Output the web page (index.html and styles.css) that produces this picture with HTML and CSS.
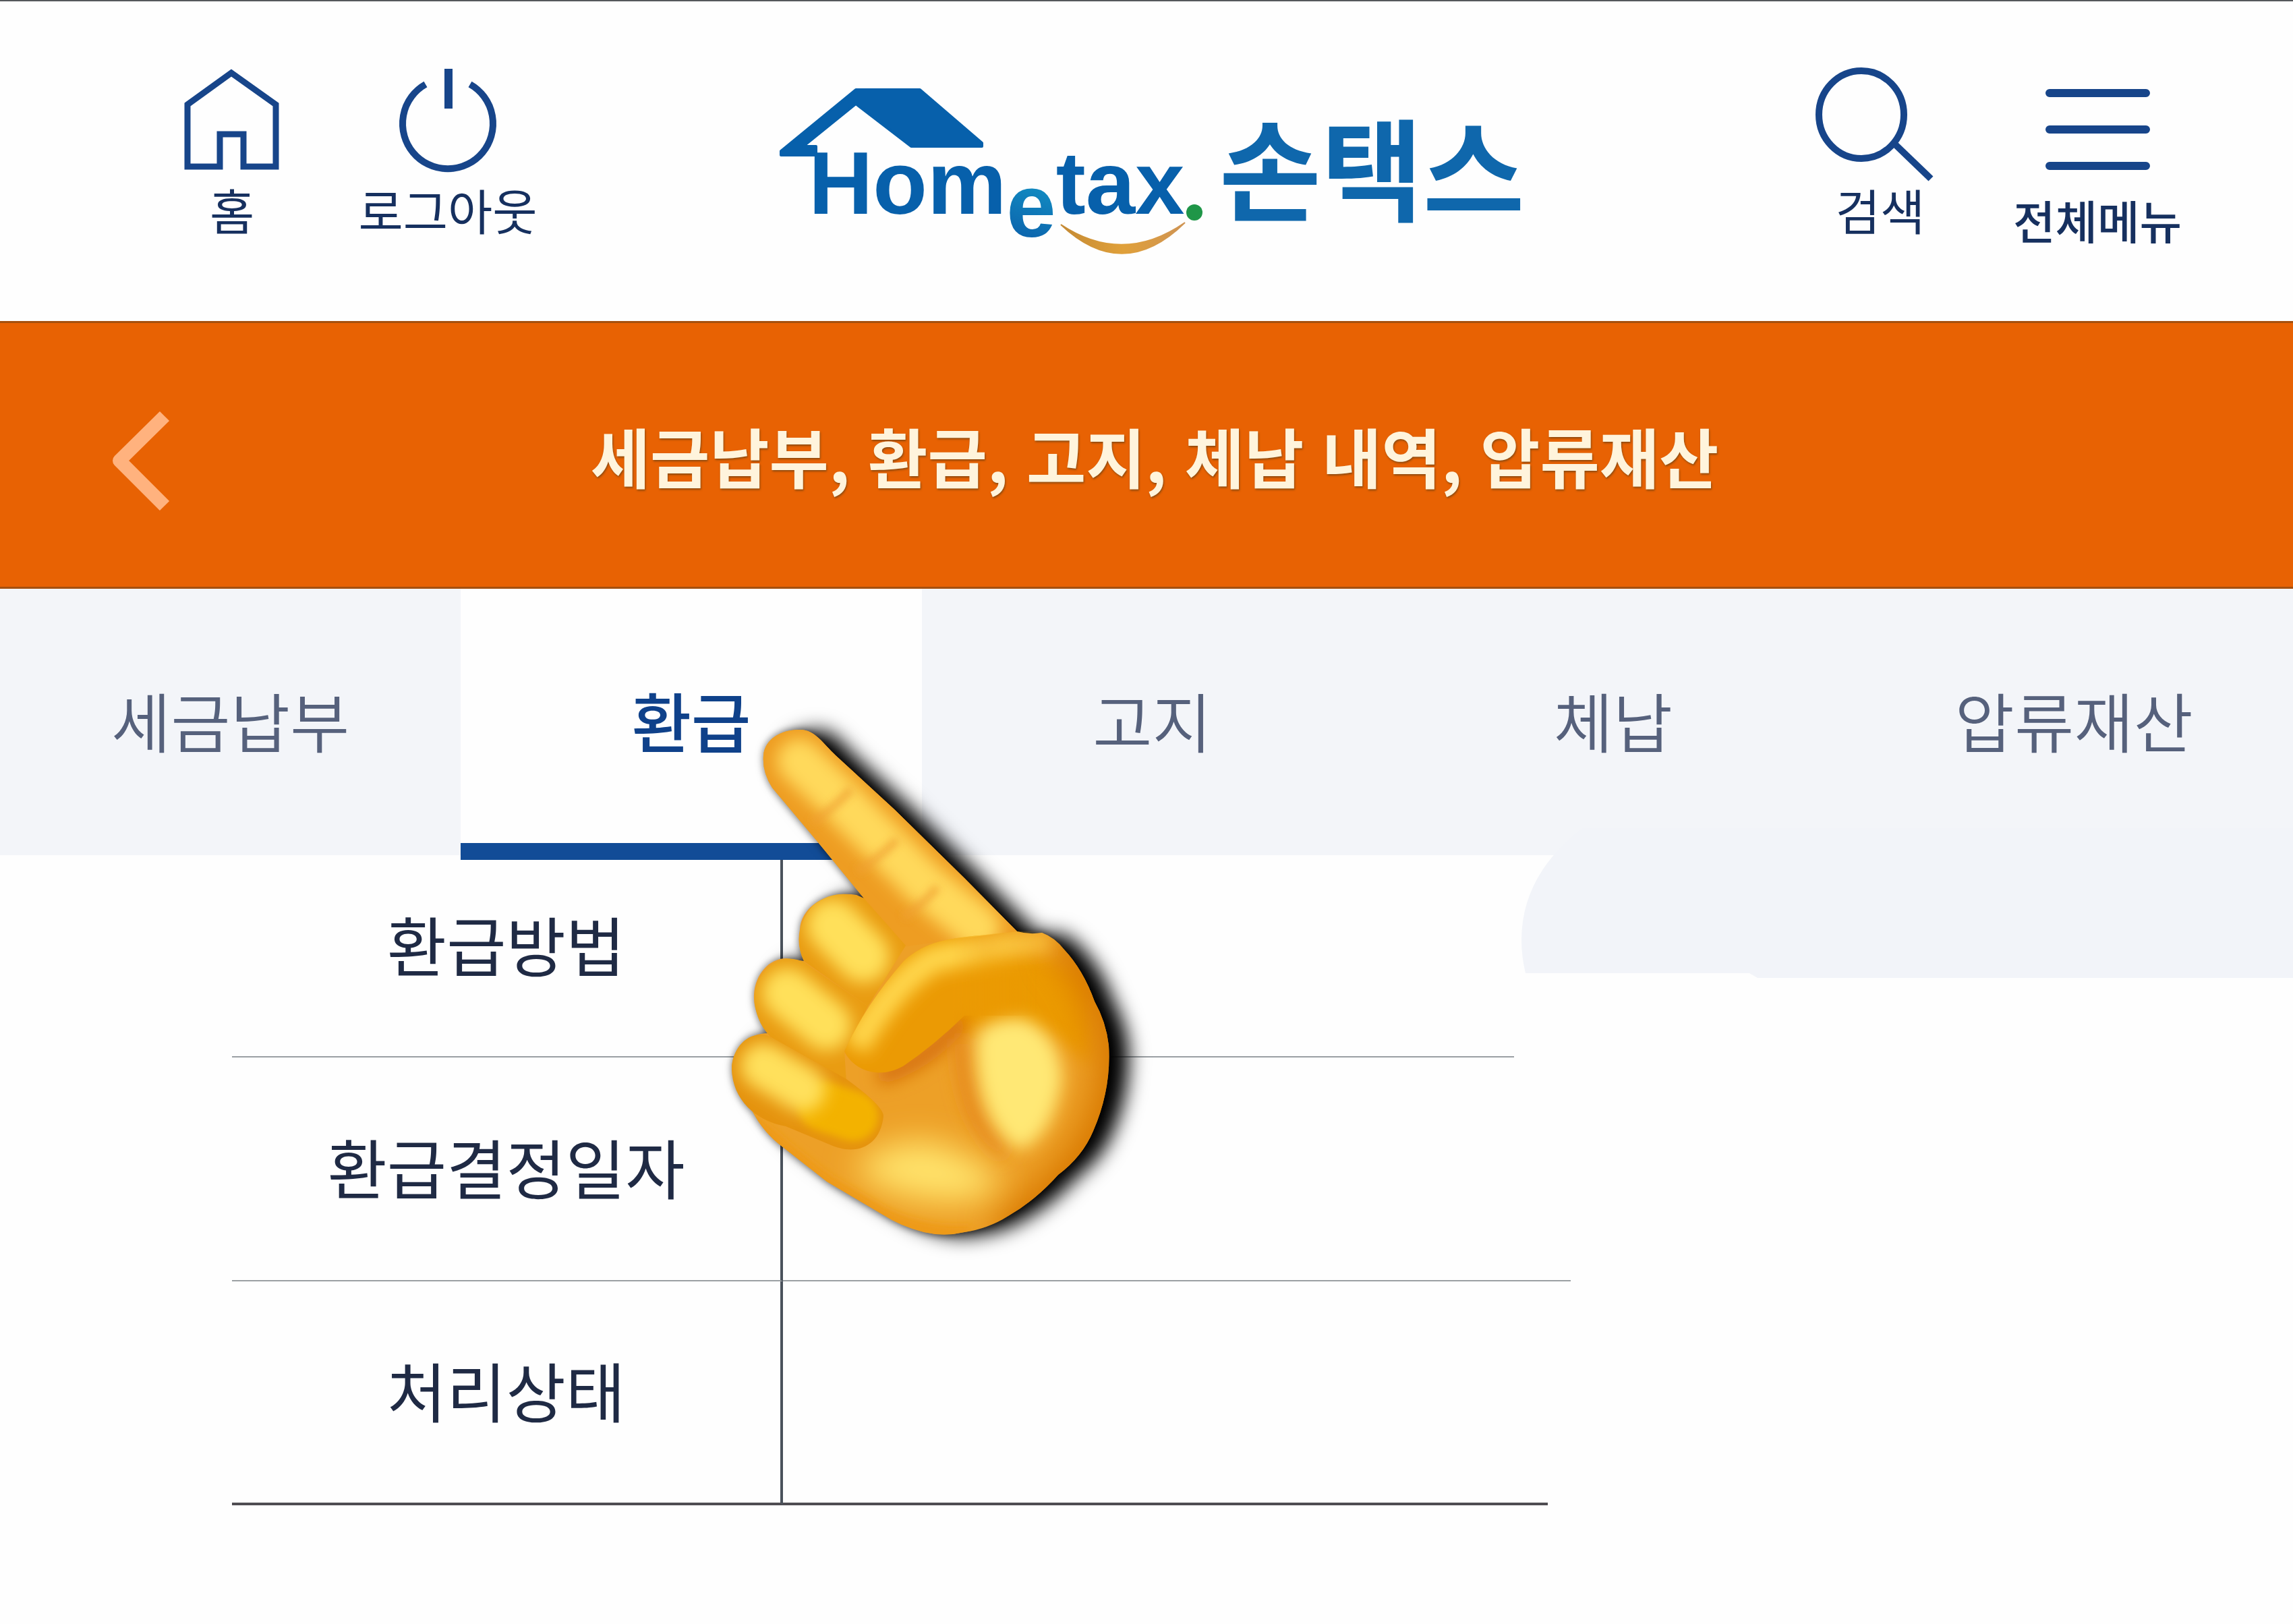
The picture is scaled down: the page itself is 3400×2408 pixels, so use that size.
FILE: index.html
```html
<!DOCTYPE html>
<html lang="ko">
<head>
<meta charset="utf-8">
<meta name="viewport" content="width=device-width, initial-scale=1">
<title>손택스 - 환급</title>
<link rel="stylesheet" href="styles.css">
</head>
<body>
<header class="topbar">
  <nav class="tools tools-left" aria-label="바로가기">
    <button class="tool tool-home" type="button">
      <svg class="icon" viewBox="0 0 200 180" aria-hidden="true"><path d="M34 65 99 18 165 65V157H117V109H82V157H34Z" stroke-width="9"/></svg>
      <span class="tool-label">홈</span>
    </button>
    <button class="tool tool-logout" type="button">
      <svg class="icon" viewBox="0 0 280 180" aria-hidden="true"><path d="M107 35A67 67 0 1 0 173 35"/><path d="M141 12V71" stroke-width="12"/></svg>
      <span class="tool-label">로그아웃</span>
    </button>
  </nav>

  <a class="logo" href="#" aria-label="Hometax 손택스">
    <svg viewBox="0 0 1120 300" aria-hidden="true">
      <defs>
        <linearGradient id="logo-e" x1="0" y1="1" x2="1" y2="0">
          <stop offset="0.3" stop-color="#0a5ba8"/>
          <stop offset="0.75" stop-color="#16a5cf"/>
        </linearGradient>
        <linearGradient id="logo-smile">
          <stop offset="0" stop-color="#c48a34"/>
          <stop offset="0.5" stop-color="#e0a03a"/>
          <stop offset="1" stop-color="#cf9454"/>
        </linearGradient>
      </defs>
      <path class="roof" d="M70 140V127H51L129 64 211 127H316V122L224 43H129L18 134V140H70Z"/>
      <text class="word" x="59" y="227">Hom<tspan class="word-e" dy="34">e</tspan><tspan dy="-34">tax</tspan></text>
      <circle cx="631" cy="225" r="12" fill="#1f9648"/>
      <path d="M433 243Q525 304 617 240Q525 330 433 243Z" fill="url(#logo-smile)" stroke="url(#logo-smile)" stroke-width="2"/>
      <text class="word-ko" x="668" y="225">손택스</text>
    </svg>
  </a>

  <nav class="tools tools-right" aria-label="메뉴">
    <button class="tool tool-search" type="button">
      <svg class="icon" viewBox="0 0 200 180" aria-hidden="true"><ellipse cx="72" cy="80" rx="63" ry="65"/><path d="M123 125 175 175"/></svg>
      <span class="tool-label">검색</span>
    </button>
    <button class="tool tool-menu" type="button">
      <svg class="icon" viewBox="0 0 260 180" aria-hidden="true"><path d="M59 48H202M59 102H202M59 156H202" stroke-width="12" stroke-linecap="round"/></svg>
      <span class="tool-label tool-label-strong">전체메뉴</span>
    </button>
  </nav>
</header>

<div class="titlebar">
  <button class="back" type="button" aria-label="뒤로">
    <svg viewBox="0 0 100 160" aria-hidden="true"><path d="M84 14 17 80 84 147"/></svg>
  </button>
  <h1 class="title">세금납부, 환급, 고지, 체납 내역, 압류재산</h1>
</div>

<main class="page">
  <nav class="tabs" aria-label="조회 구분">
    <a class="tab" href="#">세금납부</a>
    <a class="tab tab-active" href="#" aria-current="page">환급</a>
    <a class="tab" href="#">고지</a>
    <a class="tab" href="#">체납</a>
    <a class="tab" href="#">압류재산</a>
  </nav>

  <svg class="mask" viewBox="0 0 1144 222" preserveAspectRatio="none" aria-hidden="true"><path d="M90 0Q0 70 0 166Q0 190 6 215H338L350 222H1144V0Z"/></svg>

  <table class="details">
    <tbody>
      <tr class="row-method"><th scope="row">환급방법</th><td></td></tr>
      <tr class="row-date"><th scope="row">환급결정일자</th><td></td></tr>
      <tr class="row-status"><th scope="row">처리상태</th><td></td></tr>
    </tbody>
  </table>

  <svg class="pointer" viewBox="0 0 680 840" aria-hidden="true">
    <defs>
      <clipPath id="hand-clip"><path d="M92 80C94 55 120 41 147 42C168 42 180 62 199 80L286 160 390 262 468 341Q486 346 505 343Q524 350 538 368Q566 398 583 445Q600 475 604 510Q608 575 581 637Q565 675 529 702Q495 740 455 763Q425 782 390 787Q360 794 330 787Q295 778 269 761L186 712 121 661Q92 640 74 605Q47 575 45 545C46 515 68 491 102 492Q76 465 78 434C80 405 100 381 126 381L152 385Q141 362 146 338C148 305 185 280 230 287L241 292 173 209 105 128Q90 105 92 80Z"/></clipPath>
      <clipPath id="index-clip"><path d="M92 80C94 55 120 41 147 42C168 42 180 62 199 80L286 160 390 262 468 341 380 352 299 364 241 292 173 209 105 128Q90 105 92 80Z"/></clipPath>
      <clipPath id="middle-clip"><path d="M152 385C138 355 146 325 165 303C190 283 215 282 241 292L303 362 247 452Z"/></clipPath>
      <clipPath id="ring-clip"><path d="M102 497C76 470 72 430 90 405C110 378 135 378 152 387L247 452 212 519 215 565Z"/></clipPath>
      <clipPath id="little-clip"><path d="M102 497C70 485 45 515 45 545C46 590 80 622 125 630L190 657C230 675 265 660 270 615Q270 600 215 560Z"/></clipPath>
      <clipPath id="thumb-clip"><path d="M212 519Q243 450 300 385C340 350 370 352 468 341H520V466H390Q345 510 299 541C260 562 225 545 212 519Z"/></clipPath>
      <linearGradient id="thumb-fade" gradientUnits="userSpaceOnUse" x1="370" y1="0" x2="500" y2="0">
        <stop offset="0" stop-color="#fff"/>
        <stop offset="1" stop-color="#000"/>
      </linearGradient>
      <mask id="thumb-mask" maskUnits="userSpaceOnUse" x="0" y="0" width="680" height="840"><rect width="680" height="840" fill="url(#thumb-fade)"/></mask>
      <filter id="soft6" filterUnits="userSpaceOnUse" x="-60" y="-60" width="800" height="960"><feGaussianBlur stdDeviation="6"/></filter>
      <filter id="soft12" filterUnits="userSpaceOnUse" x="-60" y="-60" width="800" height="960"><feGaussianBlur stdDeviation="12"/></filter>
      <filter id="soft24" filterUnits="userSpaceOnUse" x="-60" y="-60" width="800" height="960"><feGaussianBlur stdDeviation="24"/></filter>
    </defs>
    <g class="hand">
      <g clip-path="url(#hand-clip)">
        <!-- palm -->
        <rect width="680" height="840" fill="#eda027"/>
        <path d="M360 430Q440 360 560 420V500Q480 440 390 470Z" fill="#eb9a04" stroke="#eb9a04" stroke-width="40" filter="url(#soft12)"/>
        <path d="M545 343Q625 430 625 550Q615 690 450 800" fill="none" stroke="#d97905" stroke-width="80" filter="url(#soft24)"/>
        <path d="M388 472Q330 540 262 556" fill="none" stroke="#d66f08" stroke-width="26" filter="url(#soft12)"/>
        <path d="M386 500Q390 620 450 670" fill="none" stroke="#e6891a" stroke-width="24" filter="url(#soft12)"/>
        <path d="M225 690Q320 620 400 680Q480 710 400 740Q290 750 225 690Z" fill="#ffe26a" filter="url(#soft24)"/>
        <path d="M74 620 121 661 186 712 269 761Q330 792 400 787" fill="none" stroke="#ee9a18" stroke-width="20" filter="url(#soft6)"/>
        <path d="M408 500Q420 470 475 470Q530 490 535 560Q520 650 470 665Q405 620 408 500Z" fill="#ffe874" filter="url(#soft12)"/>
        <path d="M430 362 515 358" fill="none" stroke="#fbc53c" stroke-width="22" filter="url(#soft12)"/>
      </g>
      <g clip-path="url(#index-clip)">
        <rect width="680" height="840" fill="#ee9d22"/>
        <path d="M145 88 200 140 260 200 330 270 410 335" fill="none" stroke="#ffd95c" stroke-width="66" stroke-linecap="round" filter="url(#soft12)"/>
        <path d="M165 180Q200 155 222 130M232 252Q268 228 290 205M300 320Q330 300 350 275" fill="none" stroke="#f0a030" stroke-width="12" opacity="0.7" filter="url(#soft6)"/>
      </g>
      <g clip-path="url(#middle-clip)">
        <rect width="680" height="840" fill="#e99c12"/>
        <path d="M195 332 240 378" fill="none" stroke="#ffe05a" stroke-width="78" stroke-linecap="round" filter="url(#soft12)"/>
      </g>
      <g clip-path="url(#ring-clip)">
        <rect width="680" height="840" fill="#e99c12"/>
        <path d="M127 432 185 480" fill="none" stroke="#ffe05a" stroke-width="74" stroke-linecap="round" filter="url(#soft12)"/>
      </g>
      <g clip-path="url(#little-clip)">
        <rect width="680" height="840" fill="#e5930e"/>
        <path d="M180 600 225 615" fill="none" stroke="#f3b200" stroke-width="74" stroke-linecap="round" filter="url(#soft6)"/>
        <path d="M92 540 150 575" fill="none" stroke="#ffe05c" stroke-width="68" stroke-linecap="round" filter="url(#soft12)"/>
      </g>
      <g mask="url(#thumb-mask)">
        <g clip-path="url(#thumb-clip)">
          <rect width="680" height="840" fill="#eb9a04"/>
          <path d="M228 512Q285 415 345 382Q420 365 500 364" fill="none" stroke="#ffd64c" stroke-width="40" filter="url(#soft12)"/>
        </g>
      </g>
    </g>
  </svg>
</main>
</body>
</html>
```
FILE: styles.css
```css
* {
  box-sizing: border-box;
}

body {
  margin: 0;
  background: #fefefe;
  color: #1f2a44;
  font-family: "Noto Sans CJK KR", sans-serif;
}

button {
  margin: 0;
  padding: 0;
  border: 0;
  background: none;
  color: inherit;
  font: inherit;
  cursor: pointer;
}

a {
  color: inherit;
  text-decoration: none;
}

/* top bar */
.topbar {
  display: grid;
  grid-template-columns: 1fr auto 1fr;
  align-items: start;
  padding: 88px 0 110px;
  border-top: 2px solid #55585c;
}

.tools {
  display: flex;
}

.tools-left {
  gap: 80px;
  padding-left: 244px;
}

.tools-right {
  justify-content: flex-end;
  gap: 92px;
  padding-right: 160px;
}

.tool {
  display: flex;
  flex-direction: column;
  align-items: center;
  color: #16305f;
}

.tool-home,
.tool-search {
  width: 200px;
}

.tool-logout {
  width: 280px;
}

.tool-menu {
  width: 260px;
}

.icon {
  display: block;
  width: 100%;
  height: 180px;
  fill: none;
  stroke: #17458a;
  stroke-width: 10;
}

.tool-label {
  font-size: 72px;
  line-height: 80px;
  white-space: nowrap;
}

.tool-label-strong {
  margin-top: 16px;
  font-size: 68px;
  font-weight: 500;
}

.logo {
  height: 276px;
}

.logo svg {
  display: block;
  width: 1120px;
  height: 300px;
}

.roof {
  fill: #0760ab;
  stroke: #0760ab;
  stroke-width: 4;
  stroke-linejoin: round;
}

.word {
  font-family: "Liberation Sans", sans-serif;
  font-size: 132px;
  font-weight: 700;
  fill: #0760ab;
}

.word-e {
  fill: url(#logo-e);
}

.word-ko {
  font-size: 164px;
  font-weight: 700;
  fill: #0f67ac;
}

/* orange title bar */
.titlebar {
  display: grid;
  grid-template-columns: 344px 1fr 320px;
  align-items: center;
  height: 397px;
  border-top: 3px solid #a5500f;
  border-bottom: 3px solid #a5500f;
  background: #e86203;
}

.back {
  justify-self: end;
  width: 100px;
  margin-right: 84px;
  padding-top: 16px;
}

.back svg {
  display: block;
  width: 100px;
  height: 160px;
  fill: none;
  stroke: #ffb27e;
  stroke-width: 20;
  stroke-linejoin: round;
}

.title {
  margin: 0;
  color: #fff4dc;
  font-size: 96px;
  font-weight: 700;
  line-height: 120px;
  text-align: center;
  text-shadow: 1px 2px 3px #8a4a10;
  white-space: nowrap;
}

/* tabs */
.page {
  position: relative;
}

.tabs {
  display: flex;
  overflow: hidden;
  height: 402px;
}

.tab {
  flex: 0 0 20.1%;
  height: 395px;
  padding-top: 124px;
  background: #f3f5f9;
  color: #56617c;
  font-size: 96px;
  font-weight: 350;
  line-height: 140px;
  text-align: center;
}

.tab-active {
  height: 402px;
  border-bottom: 25px solid #124c97;
  background: #fefefe;
  color: #0f418a;
  font-weight: 500;
}

.mask {
  position: absolute;
  top: 355px;
  right: 0;
  width: 1144px;
  height: 222px;
  fill: #f2f4f9;
}

/* refund details */
.details {
  position: relative;
  width: calc(100% - 344px);
  margin: 0 0 176px 344px;
  border-collapse: separate;
  border-spacing: 0;
}

.details th {
  width: 817px;
  height: 332px;
  padding: 0 0 8px;
  border-right: 4px solid #4a525c;
  border-bottom: 2px solid #9a9fa3;
  font-size: 96px;
  font-weight: 400;
  line-height: 140px;
  text-align: center;
}

.details td {
  padding: 0;
  background: linear-gradient(#9a9fa3, #9a9fa3) left bottom / 1084px 2px no-repeat;
}

.details .row-method th {
  height: 293px;
  padding-bottom: 44px;
}

.details .row-date td {
  background-size: 1168px 2px;
}

.details .row-status th {
  border-bottom: 4px solid #4f4d52;
}

.details .row-status td {
  background: linear-gradient(#4f4d52, #4f4d52) left bottom / 1134px 4px no-repeat;
}

/* pointing hand laid over the tabs and the table */
.pointer {
  position: absolute;
  top: 167px;
  left: 1040px;
  width: 680px;
  height: 840px;
  overflow: visible;
}

.hand {
  filter: drop-shadow(0 0 6px #00000088) drop-shadow(28px 2px 14px #000);
}
```
